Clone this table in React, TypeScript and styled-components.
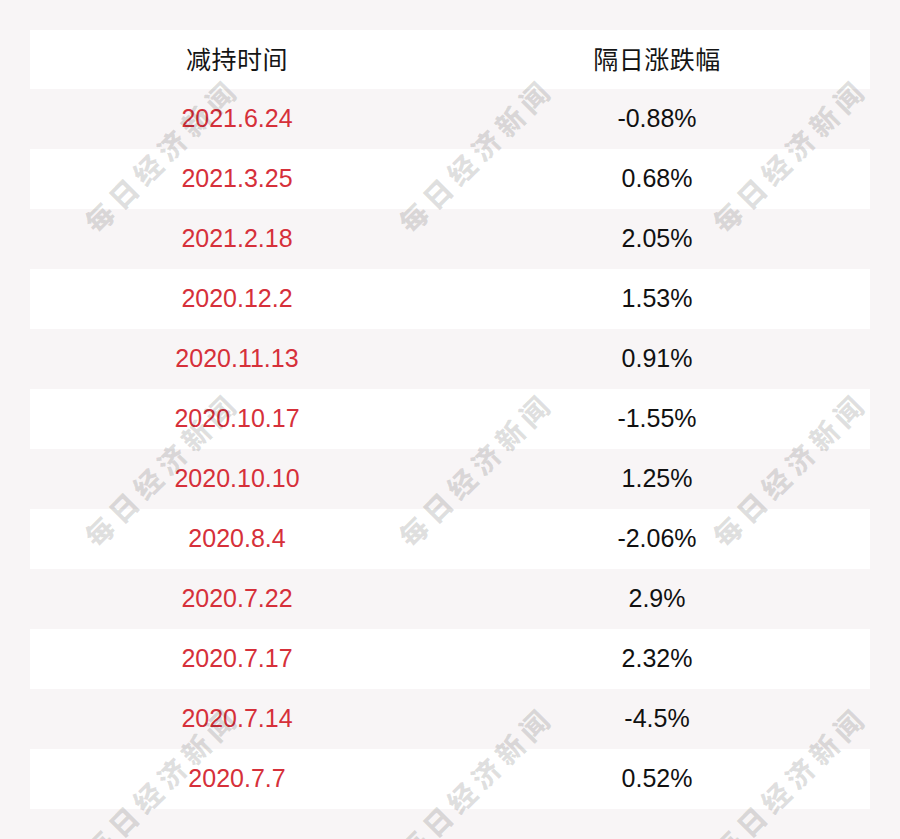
import styled, { createGlobalStyle } from "styled-components";

interface Fila {
   fecha: string;
   cambio: string;
}

const filas: Fila[] = [
   { fecha: "2021.6.24", cambio: "-0.88%" },
   { fecha: "2021.3.25", cambio: "0.68%" },
   { fecha: "2021.2.18", cambio: "2.05%" },
   { fecha: "2020.12.2", cambio: "1.53%" },
   { fecha: "2020.11.13", cambio: "0.91%" },
   { fecha: "2020.10.17", cambio: "-1.55%" },
   { fecha: "2020.10.10", cambio: "1.25%" },
   { fecha: "2020.8.4", cambio: "-2.06%" },
   { fecha: "2020.7.22", cambio: "2.9%" },
   { fecha: "2020.7.17", cambio: "2.32%" },
   { fecha: "2020.7.14", cambio: "-4.5%" },
   { fecha: "2020.7.7", cambio: "0.52%" },
];

// centros de las marcas de agua (3x3)
const marcas: { x: number; y: number }[] = [];
[157, 471, 785].forEach((y) =>
   [159, 473, 787].forEach((x) => marcas.push({ x, y }))
);

export default function App() {
   return (
      <>
         <GlobalStyle />
         <Page>
            <Table>
               <Row $white>
                  <HeadCell>减持时间</HeadCell>
                  <HeadCell>隔日涨跌幅</HeadCell>
               </Row>
               {filas.map((item, i) => (
                  <Row key={item.fecha} $white={i % 2 === 1}>
                     <DateCell>{item.fecha}</DateCell>
                     <ValueCell>{item.cambio}</ValueCell>
                  </Row>
               ))}
            </Table>
            {marcas.map((m, i) => (
               <Watermark key={i} style={{ left: m.x, top: m.y }}>
                  每日经济新闻
               </Watermark>
            ))}
         </Page>
      </>
   );
}

const GlobalStyle = createGlobalStyle`
   html, body {
      margin: 0;
      padding: 0;
      background: #f8f5f6;
   }
`;

const Page = styled.div`
   position: relative;
   width: 900px;
   height: 839px;
   box-sizing: border-box;
   padding: 30px 30px 0 30px;
   background: #f8f5f6;
   overflow: hidden;
`;

const Table = styled.div`
   display: flex;
   flex-direction: column;
   width: 840px;
`;

const Row = styled.div<{ $white?: boolean }>`
   display: grid;
   grid-template-columns: 1fr 1fr;
   height: 60px;
   background: ${(p) => (p.$white ? "#ffffff" : "#f8f5f6")};
   &:first-child {
      height: 59px;
   }
`;

const Cell = styled.div`
   display: flex;
   align-items: center;
   justify-content: center;
   padding-right: 6px;
   padding-bottom: 2px;
   font-family: "Liberation Sans", Arial, sans-serif;
   font-size: 25px;
   line-height: 1;
`;

const HeadCell = styled(Cell)`
   font-family: "Noto Sans CJK SC", "Noto Sans", sans-serif;
   font-size: 25px;
   letter-spacing: 0.5px;
   color: #151515;
`;

const DateCell = styled(Cell)`
   color: #d6303a;
`;

const ValueCell = styled(Cell)`
   color: #111111;
`;

const Watermark = styled.div`
   position: absolute;
   transform: translate(-50%, -50%) rotate(-45deg);
   white-space: nowrap;
   font-family: "Noto Sans CJK SC", sans-serif;
   font-weight: 900;
   font-size: 28px;
   letter-spacing: 6px;
   padding-left: 6px;
   color: rgba(0, 0, 0, 0.12);
   pointer-events: none;
`;
